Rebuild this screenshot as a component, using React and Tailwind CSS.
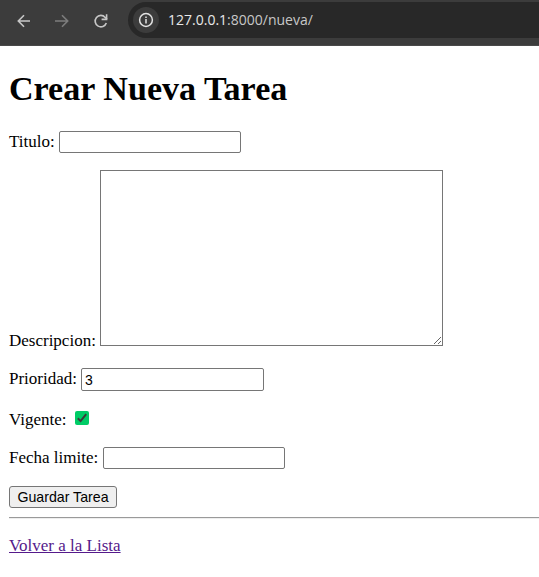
import React from "react";

const field =
  "block rounded-[2px] border border-[#767676] bg-white px-[3px] font-['Liberation_Sans',Arial,sans-serif] text-[14px] text-black outline-none";

function BrowserBar() {
  return (
    <header className="flex h-[46px] items-start border-b border-[#494949] bg-[#3c3c3c] pt-[2px]">
      <div className="flex h-9 w-32 shrink-0 items-center">
        <svg className="ml-[17px] mt-px" width="14" height="14" viewBox="0 0 14 14" fill="none" stroke="#c7c7c7" strokeWidth="1.6">
          <path d="M13 7H1.5M7 1.2 1.3 7 7 12.8" />
        </svg>
        <svg className="ml-6 mt-px" width="14" height="14" viewBox="0 0 14 14" fill="none" stroke="#7d7d7d" strokeWidth="1.6">
          <path d="M0 7h12.5M7 1.2 12.7 7 7 12.8" />
        </svg>
        <svg className="ml-6 mt-px" width="16" height="16" viewBox="0 0 16 16" fill="none" stroke="#c7c7c7" strokeWidth="1.6">
          <path d="M13.3 9.9A5.7 5.7 0 1 1 12.2 4.4L14 6.2" />
          <path d="M13.6 1.2v5.2H8.6" />
        </svg>
      </div>
      <div className="flex h-9 flex-1 items-center rounded-l-full bg-[#282828] pl-[5px]">
        <span className="flex size-[26px] items-center justify-center rounded-full bg-[#3c3c3c]">
          <svg width="16" height="16" viewBox="0 0 16 16" fill="none" stroke="#e3e3e3" strokeWidth="1.5">
            <circle cx="8" cy="8" r="6.4" />
            <path d="M8 7v4.4M8 4.4V6" />
          </svg>
        </span>
        <span className="ml-[9px] whitespace-pre font-['Open_Sans','Noto_Sans',sans-serif] text-[14px] leading-5 text-[#c7c7c7]">
          <span className="text-[#e8e8e8]">127.0.0.1</span>:8000/nueva/
        </span>
      </div>
    </header>
  );
}

export default function App() {
  return (
    <div className="h-[577px] w-full overflow-hidden bg-white font-['Liberation_Serif','Times_New_Roman',serif] text-[17px] leading-5 text-black">
      <BrowserBar />
      <main className="pl-[9px] pt-6">
        <h1 className="text-[34.1px] font-bold leading-[38px]">Crear Nueva Tarea</h1>
        <form onSubmit={(e) => e.preventDefault()}>
          <div className="mt-[23px] flex h-[22px] gap-1">
            <label htmlFor="titulo" className="w-[46px] whitespace-nowrap pt-px">Titulo:</label>
            <input id="titulo" className={`${field} h-[22px] w-[182px]`} />
          </div>
          <div className="mt-[17px] flex h-[176px] items-end gap-1">
            <label htmlFor="descripcion" className="-mb-[5px] w-[87px] whitespace-nowrap">Descripcion:</label>
            <textarea id="descripcion" className={`${field} h-[176px] w-[343px] resize rounded-none`} />
          </div>
          <div className="mt-[22px] flex h-[23px] gap-1">
            <label htmlFor="prioridad" className="w-[68px] whitespace-nowrap pt-px">Prioridad:</label>
            <input id="prioridad" defaultValue="3" className={`${field} h-[23px] w-[183px]`} />
          </div>
          <div className="mt-[19px] flex h-5">
            <label htmlFor="vigente" className="w-[66px] whitespace-nowrap">Vigente:</label>
            <span className="mt-px flex size-[14px] items-center justify-center rounded-[2px] bg-[#0c6]">
              <svg id="vigente" width="14" height="14" viewBox="0 0 14 14" fill="none" stroke="#3b3b3b" strokeWidth="2">
                <path d="m2.8 7.3 2.8 2.8 5.6-7" />
              </svg>
            </span>
          </div>
          <div className="mt-[17px] flex h-[22px] gap-1">
            <label htmlFor="fecha" className="w-[90px] whitespace-nowrap pt-px">Fecha limite:</label>
            <input id="fecha" className={`${field} h-[22px] w-[182px]`} />
          </div>
          <button className="mt-[17px] flex h-[22px] w-[108px] items-center justify-center whitespace-nowrap rounded-[3px] border border-[#767676] bg-[#efefef] font-['Liberation_Sans',Arial,sans-serif] text-[14.2px] leading-5">
            Guardar Tarea
          </button>
        </form>
        <hr className="mt-[9px] h-[2px] border-0 border-b border-t border-b-[#eee] border-t-[#9a9a9a]" />
        <a href="#lista" className="mt-[17px] inline-block text-[#551a8b] underline">Volver a la Lista</a>
      </main>
    </div>
  );
}
